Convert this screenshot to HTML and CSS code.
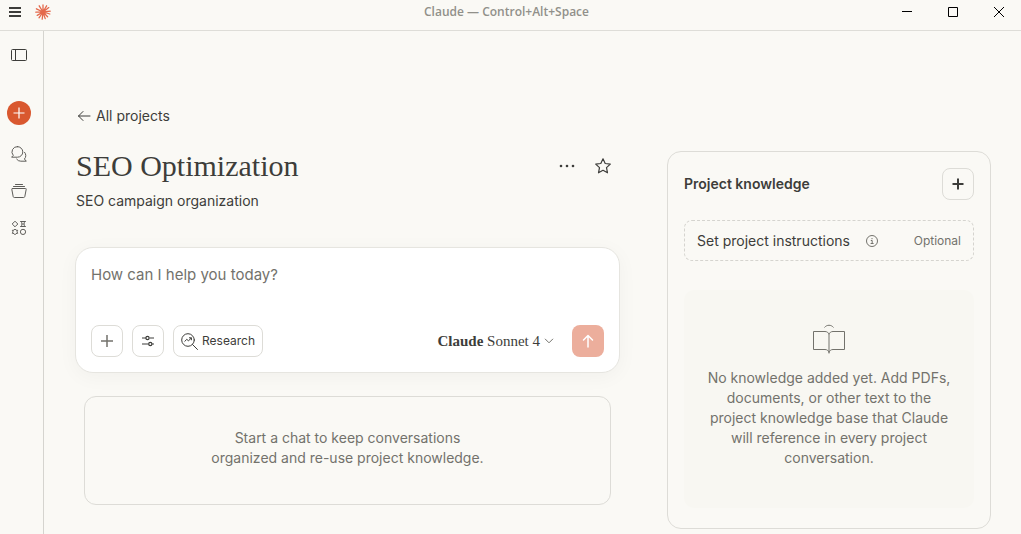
FILE: index.html
```html
<!DOCTYPE html>
<html lang="en">
<head>
  <meta charset="UTF-8">
  <meta name="viewport" content="width=device-width, initial-scale=1.0">
  <title>Claude</title>
  <link rel="stylesheet" href="styles.css">
</head>
<body>
  <!-- Title Bar -->
  <header class="titlebar">
    <div class="titlebar-left">
      <button type="button" class="icon-btn" aria-label="Menu">
        <svg width="12" height="12" viewBox="0 0 12 12" stroke="#3d3d3a" stroke-width="2"><path d="M0 2h12M0 6h12M0 10h12" shape-rendering="crispEdges"/></svg>
      </button>
      <svg class="logo" width="16" height="16" viewBox="0 0 16 16" stroke="#e4694c" stroke-width="1.3" stroke-linecap="round">
        <path d="M8 8V1M8 8l3.6-6.2M8 8l5.8-4.4M8 8l7.2-.8M8 8l6.8 2M8 8l4.6 4.8M8 8l2.2 6.6M8 8l-.8 7.2M8 8l-4 5.8M8 8l-5.8 3.4M8 8L.8 8.2M8 8L1.4 4.8M8 8L4.2 1.8"/>
      </svg>
    </div>
    <div class="titlebar-title">Claude — Control+Alt+Space</div>
    <div class="window-controls">
      <button type="button" class="icon-btn" aria-label="Minimize">
        <svg width="10" height="10" viewBox="0 0 10 10" shape-rendering="crispEdges"><path d="M0 4h10v1H0z" fill="#000"/></svg>
      </button>
      <button type="button" class="icon-btn" aria-label="Maximize">
        <svg width="10" height="10" viewBox="0 0 10 10" fill="none" stroke="#000"><path d="M.5 .5h9v9h-9z"/></svg>
      </button>
      <button type="button" class="icon-btn" aria-label="Close">
        <svg width="10" height="10" viewBox="0 0 10 10" fill="none" stroke="#000"><path d="M0 0l10 10M10 0L0 10"/></svg>
      </button>
    </div>
  </header>

  <div class="app">
    <!-- Sidebar -->
    <nav class="sidebar">
      <button type="button" class="icon-btn" aria-label="Toggle sidebar">
        <svg width="16" height="12" viewBox="0 0 16 12" fill="none" stroke="#3d3d3a"><rect x=".5" y=".5" width="15" height="11" rx="1"/><path d="M4.500 .5v11"/></svg>
      </button>
      <button type="button" class="icon-btn new-chat" aria-label="New chat">
        <svg width="12" height="12" viewBox="0 0 12 12" stroke="#fff" stroke-width="1.2"><path d="M6 .5v11M.5 6h11"/></svg>
      </button>
      <a href="#" class="side-link" aria-label="Chats">
        <svg width="16" height="16" viewBox="0 0 16 16" fill="none" stroke="#5e5d59" stroke-linejoin="round" stroke-linecap="round">
          <path d="M6.5 .6a5.3 5.3 0 1 1 0 10.6H.6l1.7-1.8A5.3 5.3 0 0 1 6.5 .6z"/>
          <path d="M13.6 6.3a4.8 4.8 0 0 1-.2 6.7l1.9 2.2H9.800a5 5 0 0 1-4.2-2.1"/>
        </svg>
      </a>
      <a href="#" class="side-link" aria-label="Projects">
        <svg width="16" height="16" viewBox="0 0 16 16" fill="none" stroke="#5e5d59" stroke-linejoin="round" stroke-linecap="round">
          <path d="M4.5 1.500h7M2.5 3.500h11M1.500 5.500h13a.7.7 0 0 1 .7.9l-1.400 7.200a1.200 1.200 0 0 1-1.100.9H3.300a1.200 1.200 0 0 1-1.100-.9L.8 6.400a.7.7 0 0 1 .7-.9z"/>
        </svg>
      </a>
      <a href="#" class="side-link" aria-label="Artifacts">
        <svg width="16" height="16" viewBox="0 0 16 16" fill="none" stroke="#5e5d59" stroke-linejoin="round">
          <path d="M4 1.200L6.800 4 4 6.800 1.200 4z"/>
          <path d="M9.200 1.500h5.600M9.200 6.500h5.600M10.200 1.500c1 1.700 1 3.300 0 5M13.800 1.500c-1 1.700-1 3.300 0 5M11.200 4h1.600"/>
          <path d="M4 9l1 1.200 1.700.1-.7 1.500.7 1.500-1.700.2-1 1.300-1-1.300-1.700-.2.7-1.500-.7-1.500 1.700-.1z"/>
          <circle cx="12" cy="11.900" r="2.600"/>
        </svg>
      </a>
    </nav>

    <main class="content">
      <a href="#" class="back-link">
        <svg width="14" height="12" viewBox="0 0 14 12" fill="none" stroke="currentColor" stroke-linecap="round" stroke-linejoin="round"><path d="M13 6H1.500M6 1.500L1.500 6 6 10.500"/></svg>
        All projects
      </a>

      <div class="columns">
        <!-- Project -->
        <section class="project">
          <div class="project-head">
            <h1>SEO Optimization</h1>
            <button type="button" class="icon-btn" aria-label="More options">
              <svg width="16" height="16" viewBox="0 0 16 16" fill="#3d3d3a"><circle cx="2" cy="8" r="1.300"/><circle cx="8" cy="8" r="1.300"/><circle cx="14" cy="8" r="1.300"/></svg>
            </button>
            <button type="button" class="icon-btn" aria-label="Star project">
              <svg width="16" height="16" viewBox="0 0 16 16" fill="none" stroke="#3d3d3a" stroke-width="1.2" stroke-linejoin="round"><path d="M8 .8l2.200 4.700 5.100.6-3.800 3.500 1 5.200L8 12.300l-4.500 2.500 1-5.200L.7 6.100l5.100-.6z"/></svg>
            </button>
          </div>
          <p class="description">SEO campaign organization</p>

          <form class="composer">
            <textarea rows="1" aria-label="Message" placeholder="How can I help you today?"></textarea>
            <div class="composer-tools">
              <button type="button" class="tool-btn" aria-label="Add content">
                <svg width="14" height="14" viewBox="0 0 14 14" stroke="#73726c" stroke-width="1.5"><path d="M7 1v12M1 7h12"/></svg>
              </button>
              <button type="button" class="tool-btn" aria-label="Tools">
                <svg width="14" height="12" viewBox="0 0 14 12" fill="none" stroke="#3d3d3a" stroke-width="1.2"><path d="M1 3h4M8.500 3H13M1 9h6.500M11 9h2"/><circle cx="6.500" cy="3" r="1.600"/><circle cx="9.300" cy="9" r="1.600"/></svg>
              </button>
              <button type="button" class="tool-btn research">
                <svg width="17" height="17" viewBox="0 0 17 17" fill="none" stroke="#3d3d3a" stroke-linecap="round" stroke-linejoin="round"><circle cx="7" cy="7" r="6.300"/><path d="M11.500 11.500l5 5M3.800 8.300l2-2 1.700 1.600 2.700-2.900M8.400 4.800h2v2"/></svg>
                Research
              </button>
              <button type="button" class="model-btn">
                <span><b>Claude</b> Sonnet 4</span>
                <svg width="10" height="6" viewBox="0 0 10 6" fill="none" stroke="#73726c"><path d="M1 .8l4 4 4-4"/></svg>
              </button>
              <button type="submit" class="send-btn" aria-label="Send message">
                <svg width="12" height="14" viewBox="0 0 12 14" fill="none" stroke="#fff" stroke-width="1.5" stroke-linecap="round" stroke-linejoin="round"><path d="M6 13V1.500M1.500 6L6 1.500 10.500 6"/></svg>
              </button>
            </div>
          </form>

          <div class="start-card">
            <p>Start a chat to keep conversations<br>organized and re-use project knowledge.</p>
          </div>
        </section>

        <!-- Knowledge -->
        <aside class="knowledge">
          <div class="knowledge-head">
            <h2>Project knowledge</h2>
            <button type="button" class="tool-btn" aria-label="Add knowledge">
              <svg width="12" height="12" viewBox="0 0 12 12" stroke="#3d3d3a" stroke-width="2"><path d="M6 .5v11M.5 6h11"/></svg>
            </button>
          </div>
          <button type="button" class="instructions">
            Set project instructions
            <svg width="12" height="12" viewBox="0 0 12 12" fill="none" stroke="#73726c"><circle cx="6" cy="6" r="5.500"/><path d="M4.800 5.500H6.200V8.500M4.600 8.500h3M6 3v1.200"/></svg>
            <span class="optional">Optional</span>
          </button>
          <div class="empty">
            <svg width="32" height="30" viewBox="0 0 32 30" fill="none" stroke="#73726c" stroke-linejoin="round">
              <path d="M11.500 3.500c2.200-3 6.800-3 9 0"/>
              <path d="M16 10.500c-.5-2-2-3-4-3H.5v18H12c2 0 3.500 1 4 3 .5-2 2-3 4-3h11.500v-18H20c-2 0-3.500 1-4 3zM16 10.500v19"/>
            </svg>
            <p>No knowledge added yet. Add PDFs, documents, or other text to the project knowledge base that Claude will reference in every project conversation.</p>
          </div>
        </aside>
      </div>
    </main>
  </div>
</body>
</html>
```
FILE: styles.css
```css
/* General Styles */
* {
  box-sizing: border-box;
}

body {
  margin: 0;
  min-height: 100vh;
  display: flex;
  flex-direction: column;
  font-family: Inter, "Liberation Sans", sans-serif;
  font-size: 14px;
  line-height: 20px;
  color: #3d3d3a;
  background-color: #faf9f5;
}

h1, h2, p {
  margin: 0;
}

a {
  color: inherit;
  text-decoration: none;
}

svg {
  display: block;
  flex-shrink: 0;
}

button {
  font: inherit;
  color: inherit;
  padding: 0;
  border: none;
  background: none;
  cursor: pointer;
}

.icon-btn {
  display: flex;
  align-items: center;
  justify-content: center;
}

/* Title Bar */
.titlebar {
  display: grid;
  grid-template-columns: 1fr auto 1fr;
  align-items: center;
  height: 31px;
  padding: 0 17px 6px 9px;
  border-bottom: 1px solid #deddd8;
}

.titlebar-left {
  display: flex;
  align-items: center;
  gap: 14px;
}

.titlebar-title {
  font-family: "Open Sans", "Noto Sans", sans-serif;
  font-size: 12px;
  font-weight: 600;
  color: #91908a;
}

.window-controls {
  display: flex;
  justify-content: flex-end;
  gap: 36px;
}

/* Sidebar */
.app {
  display: flex;
  flex: 1;
}

.sidebar {
  display: flex;
  flex-direction: column;
  align-items: center;
  width: 44px;
  padding: 18px 6px 0 0;
  border-right: 1px solid #d5d4cf;
}

.new-chat {
  width: 24px;
  height: 24px;
  margin: 40px 0 14px;
  border-radius: 50%;
  background: #d9582f;
}

.side-link {
  padding: 7px;
  margin-bottom: 7px;
}

/* Content */
.content {
  flex: 1;
  min-width: 0;
  padding: 75px 30px 6px 31px;
}

.back-link {
  display: inline-flex;
  align-items: center;
  gap: 5px;
  padding-left: 2px;
}

.columns {
  display: grid;
  grid-template-columns: minmax(0, 1fr) 324px;
  align-items: start;
  gap: 47px;
  margin-top: 20px;
}

.project {
  padding-top: 3px;
}

.project-head {
  display: flex;
  align-items: center;
  gap: 20px;
  padding-right: 9px;
}

.project-head h1 {
  flex: 1;
  font-family: "Liberation Serif", serif;
  font-size: 30px;
  line-height: 32px;
  font-weight: 400;
}

.description {
  margin-top: 9px;
}

.project-head,
.description {
  padding-left: 1px;
}

/* Composer */
.composer {
  margin-top: 36px;
  padding: 15px;
  border: 1px solid #e6e5e0;
  border-radius: 18px;
  background: #fff;
  box-shadow: 0 4px 20px rgba(0, 0, 0, 0.04);
}

.composer textarea {
  display: block;
  width: 100%;
  height: 24px;
  margin-bottom: 38px;
  padding: 0;
  border: none;
  outline: none;
  resize: none;
  overflow: hidden;
  font: inherit;
  font-size: 15px;
  line-height: 24px;
  background: none;
}

.composer textarea::placeholder {
  color: #73726c;
}

.composer-tools {
  display: flex;
  align-items: center;
  gap: 9px;
}

.tool-btn {
  display: flex;
  align-items: center;
  justify-content: center;
  width: 32px;
  height: 32px;
  border: 1px solid #dddcd7;
  border-radius: 8px;
}

.research {
  gap: 4px;
  width: auto;
  padding: 0 7px;
  font-size: 12px;
}

.model-btn {
  display: flex;
  align-items: center;
  gap: 4px;
  margin-left: auto;
  margin-right: 9px;
  font-family: "Liberation Serif", serif;
  font-size: 15px;
}

.send-btn {
  display: flex;
  align-items: center;
  justify-content: center;
  width: 32px;
  height: 32px;
  border-radius: 8px;
  background: #ecae9c;
}

.start-card {
  margin: 23px 9px 0;
  padding: 31px 16px 36px;
  border: 1px solid #dddcd7;
  border-radius: 12px;
  text-align: center;
  color: #73726c;
}

/* Knowledge */
.knowledge {
  margin-top: 4px;
  padding: 16px;
  border: 1px solid #dddcd7;
  border-radius: 14px;
}

.knowledge-head {
  display: flex;
  align-items: center;
  justify-content: space-between;
}

.knowledge-head h2 {
  font-size: 14px;
  font-weight: 600;
}

.instructions {
  display: flex;
  align-items: center;
  gap: 16px;
  width: 100%;
  height: 41px;
  margin-top: 20px;
  padding: 0 12px;
  border: 1px dashed #d5d4cf;
  border-radius: 8px;
}

.optional {
  margin-left: auto;
  font-size: 12px;
  color: #73726c;
}

.empty {
  display: flex;
  flex-direction: column;
  align-items: center;
  gap: 14px;
  margin: 29px 0 4px;
  padding: 34px 20px 40px;
  border-radius: 10px;
  text-align: center;
  color: #73726c;
  background: #f8f7f2;
}
```
